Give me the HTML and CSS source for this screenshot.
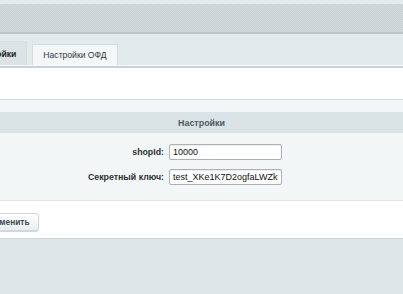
FILE: index.html
```html
<!DOCTYPE html>
<html lang="ru">
<head>
<meta charset="utf-8">
<link rel="stylesheet" href="styles.css">
</head>
<body>
<div class="page">
  <div class="top-strip"></div>
  <div class="band"></div>
  <div class="tabs">
    <div class="tab tab-active">Настройки</div>
    <div class="tab">Настройки ОФД</div>
  </div>
  <div class="content">
    <div class="blank"></div>
    <div class="form">
      <div class="form-head">Настройки</div>
      <div class="form-body">
        <div class="row">
          <label class="label">shopId:</label>
          <input class="field" type="text" value="10000">
        </div>
        <div class="row">
          <label class="label">Секретный ключ:</label>
          <input class="field" type="text" value="test_XKe1K7D2ogfaLWZkLjv8sQpR3">
        </div>
      </div>
    </div>
    <div class="buttons">
      <button class="btn">Применить</button>
    </div>
  </div>
  <div class="footer"></div>
</div>
</body>
</html>
```

FILE: styles.css
```css
* { box-sizing: border-box; }
html, body { margin: 0; padding: 0; }
body {
  width: 403px;
  height: 294px;
  overflow: hidden;
  font-family: "Liberation Sans", Arial, sans-serif;
  background: #e0e7e9;
}
.page { display: flex; flex-direction: column; }
.top-strip { height: 4px; background: #e5ecee; }
.band {
  height: 28px;
  background-color: #cdd6d9;
  background-image: repeating-conic-gradient(#c8d1d4 0 25%, #d2dadd 0 50%);
  background-size: 2px 2px;
}
.tabs {
  height: 34px;
  border-top: 2px solid #bcc6c9;
  background: #e3eaec;
  display: flex;
  align-items: flex-end;
  gap: 5px;
  margin-left: -40px;
  border-bottom: 1px solid #f7fafa;
}
.tab {
  font-size: 8.6px;
  color: #2f393c;
  padding: 0 10px;
  height: 21px;
  display: flex;
  align-items: center;
  background: #f4f7f8;
  border: 1px solid #d3dbde;
  border-bottom: none;
}
.tab-active {
  height: 24px;
  font-weight: bold;
  background: #dbe3e6;
  border-color: #d6dee1;
  color: #222;
}
.content {
  border-top: 2px solid #c8d1d4;
  background: #fff;
  display: flex;
  flex-direction: column;
}
.blank { height: 32px; border-bottom: 1px solid #d4dbdd; }
.form { background: #f2f6f7; border-bottom: 1px solid #dfe6e8; padding-top: 12px; }
.form-head {
  height: 21px;
  background: #dae3e5;
  display: flex;
  align-items: center;
  justify-content: center;
  font-size: 8.9px;
  font-weight: bold;
  color: #4e5b5f;
}
.form-body {
  display: flex;
  flex-direction: column;
  gap: 9px;
  padding: 11px 0 15px;
}
.row {
  display: grid;
  grid-template-columns: 164px 113px;
  column-gap: 5px;
  align-items: center;
}
.label {
  text-align: right;
  font-size: 8.8px;
  font-weight: bold;
  color: #2c3336;
}
.field {
  height: 16px;
  width: 113px;
  border: 1px solid #a9b3b7;
  border-radius: 2px;
  padding: 0 3px;
  font-family: "Liberation Sans", Arial, sans-serif;
  font-size: 9px;
  color: #111;
  background: #fff;
  box-shadow: inset 0 1px 1px rgba(0,0,0,0.08);
  outline: none;
}
.buttons {
  height: 37px;
  display: flex;
  align-items: center;
  padding-top: 4px;
  margin-left: -26px;
}
.btn {
  height: 18px;
  padding: 0 8px;
  font-family: "Liberation Sans", Arial, sans-serif;
  font-size: 8.4px;
  font-weight: bold;
  color: #3f4a4d;
  background: linear-gradient(#ffffff, #e8eef0);
  border: 1px solid #d0d8db;
  border-radius: 3px;
  box-shadow: 0 1px 1px rgba(0,0,0,0.18);
}
.footer {
  height: 60px;
  border-top: 1px solid #cdd5d8;
  background: #dfe6e8;
}
```
